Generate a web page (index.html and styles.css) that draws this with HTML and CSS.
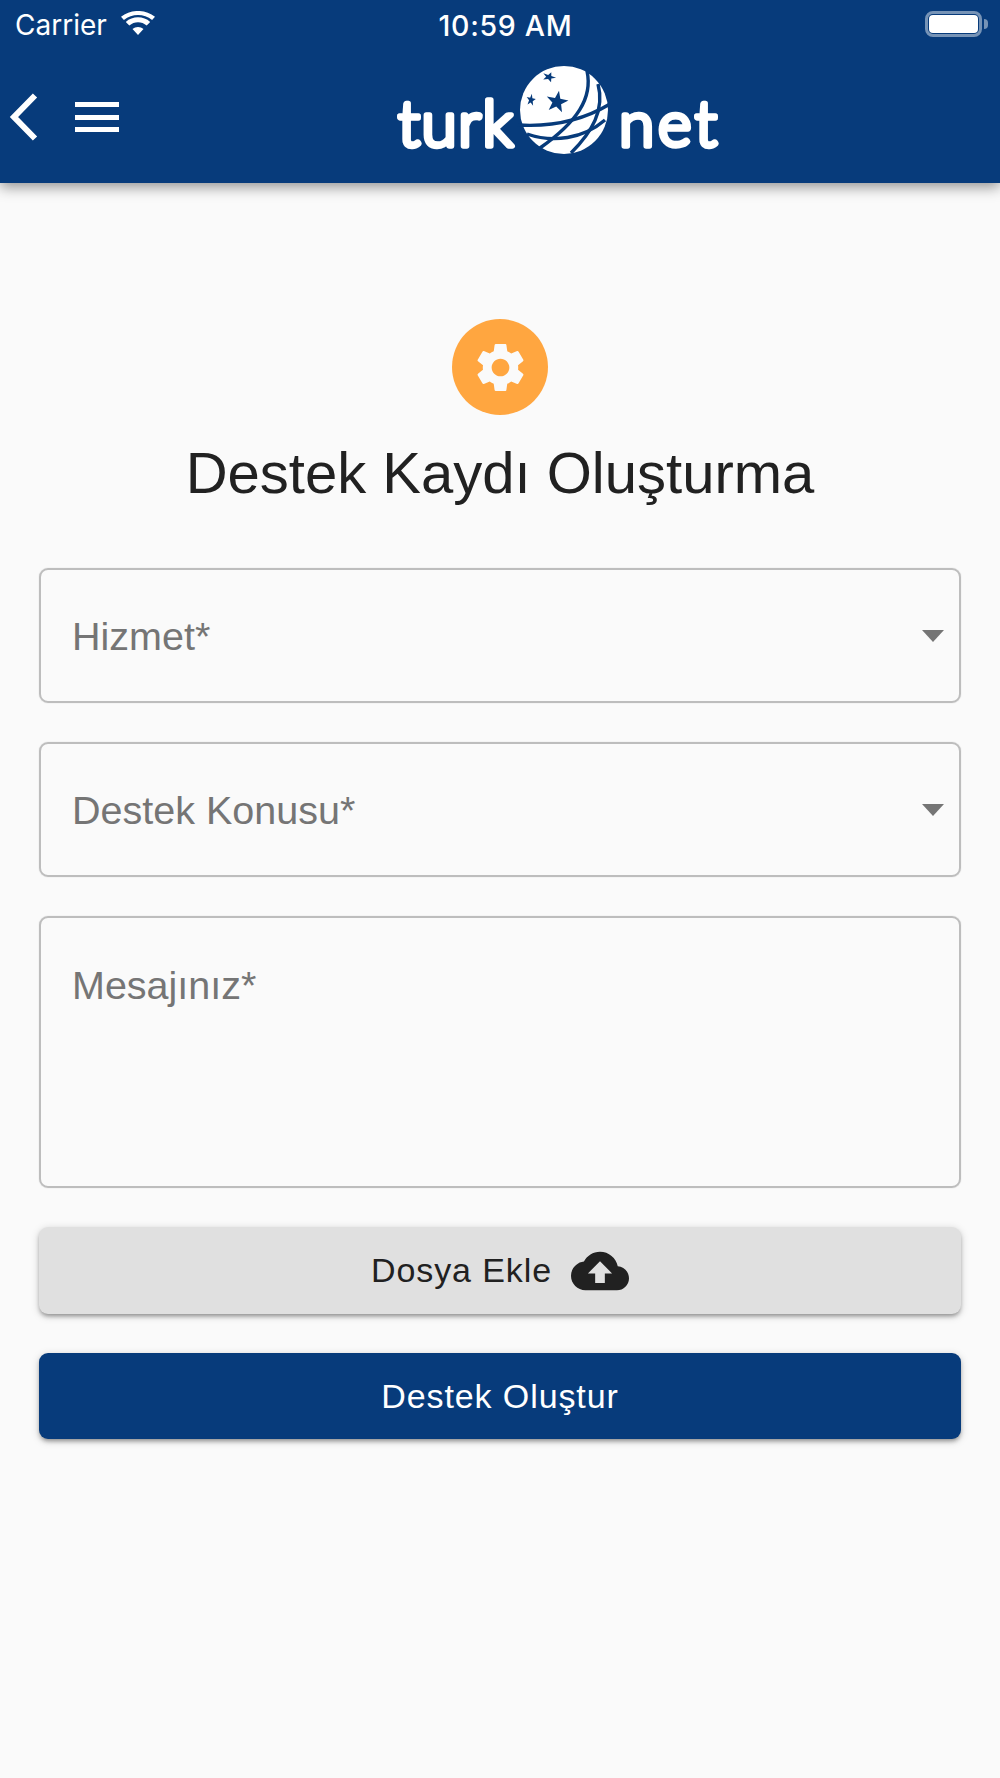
FILE: index.html
```html
<!DOCTYPE html>
<html lang="tr">
<head>
<meta charset="utf-8">
<title>Destek Kaydı Oluşturma</title>
<link rel="stylesheet" href="styles.css">
</head>
<body>
<header class="appbar">
  <div class="status">
    <div class="status-left">
      <span class="carrier">Carrier</span>
      <svg class="wifi" viewBox="0 0 34 24" aria-hidden="true"><path d="M17 24 L11.5 18 C14.5 15.2 19.5 15.2 22.5 18 Z M8.3 14.6 L4.8 10.9 C11.5 4.8 22.5 4.8 29.2 10.9 L25.7 14.6 C20.8 10 13.2 10 8.3 14.6 Z M2.9 8.9 L0 5.8 C9.6 -2 24.4 -2 34 5.8 L31.1 8.9 C22.9 2.4 11.1 2.4 2.9 8.9 Z"/></svg>
    </div>
    <span class="clock">10:59 AM</span>
    <div class="battery"><span class="battery-body"><span class="battery-fill"></span></span><span class="battery-tip"></span></div>
  </div>
  <div class="nav">
    <div class="nav-left">
      <svg class="back" viewBox="0 0 30 48" aria-hidden="true"><path d="M26 2.5 L5 24 L26 45.500" fill="none" stroke="#fff" stroke-width="6"/></svg>
      <span class="menu"><i></i><i></i><i></i></span>
    </div>
    <svg class="logo" viewBox="390 60 340 100" role="img" aria-label="turk net">
      <text class="logo-text" x="398" y="146" textLength="115" lengthAdjust="spacing">turk</text>
      <text class="logo-text" x="619" y="146" textLength="98" lengthAdjust="spacing">net</text>
      <circle cx="564" cy="110" r="44" fill="#fff"/>
      <g fill="none" stroke="#073b7b" stroke-width="3.4">
        <path d="M587 71 C593 98 577 122 540 148"/>
        <path d="M598 84 C605 110 592 132 571 153"/>
        <path d="M518 125 C550 127 580 122 610 104"/>
        <path d="M527 134 C553 143 583 139 605 120"/>
      </g>
      <path class="star" d="M559 90.7 L560.3 98.8 L568.4 100.4 L561.1 104.2 L562 112.3 L556.2 106.5 L548.7 110 L552.4 102.6 L546.8 96.6 L555 97.9 Z"/>
      <path class="star" transform="translate(549 77) rotate(12) scale(.62 .46) translate(-557 -102)" d="M559 90.7 L560.3 98.8 L568.4 100.4 L561.1 104.2 L562 112.3 L556.2 106.5 L548.7 110 L552.4 102.6 L546.8 96.6 L555 97.9 Z"/>
      <path class="star" transform="translate(531 100) scale(.42 .56) translate(-557 -102)" d="M559 90.7 L560.3 98.8 L568.4 100.4 L561.1 104.2 L562 112.3 L556.2 106.5 L548.7 110 L552.4 102.6 L546.8 96.6 L555 97.9 Z"/>
    </svg>
  </div>
</header>
<main class="content">
  <div class="badge">
    <svg viewBox="0 0 24 24" aria-hidden="true"><path d="M19.14,12.94c0.04-0.3,0.06-0.61,0.06-0.94c0-0.32-0.02-0.64-0.07-0.94l2.03-1.58c0.18-0.14,0.23-0.41,0.12-0.61 l-1.92-3.32c-0.12-0.22-0.37-0.29-0.59-0.22l-2.39,0.96c-0.5-0.38-1.03-0.7-1.62-0.94L14.4,2.81c-0.04-0.24-0.24-0.41-0.48-0.41 h-3.84c-0.24,0-0.43,0.17-0.47,0.41L9.25,5.35C8.66,5.59,8.12,5.92,7.63,6.29L5.24,5.33c-0.22-0.08-0.47,0-0.59,0.22L2.74,8.87 C2.62,9.08,2.66,9.34,2.86,9.48l2.03,1.58C4.84,11.36,4.8,11.69,4.8,12s0.02,0.64,0.07,0.94l-2.03,1.58 c-0.18,0.14-0.23,0.41-0.12,0.61l1.92,3.32c0.12,0.22,0.37,0.29,0.59,0.22l2.39-0.96c0.5,0.38,1.03,0.7,1.62,0.94l0.36,2.54 c0.05,0.24,0.24,0.41,0.48,0.41h3.84c0.24,0,0.44-0.17,0.47-0.41l0.36-2.54c0.59-0.24,1.13-0.56,1.62-0.94l2.39,0.96 c0.22,0.08,0.47,0,0.59-0.22l1.92-3.32c0.12-0.22,0.07-0.47-0.12-0.61L19.14,12.94z M12,15.6c-1.98,0-3.6-1.62-3.6-3.6 s1.62-3.6,3.6-3.6s3.6,1.62,3.6,3.6S13.98,15.6,12,15.6z"/></svg>
  </div>
  <h1 class="title">Destek Kaydı Oluşturma</h1>
  <form class="form">
    <div class="field field-select"><span class="label">Hizmet*</span><span class="caret"></span></div>
    <div class="field field-select"><span class="label">Destek Konusu*</span><span class="caret"></span></div>
    <div class="field field-area"><span class="label">Mesajınız*</span></div>
    <button class="btn btn-file" type="button">Dosya Ekle
      <svg class="cloud" viewBox="0 0 24 24" aria-hidden="true"><path d="M19.35 10.04C18.67 6.59 15.64 4 12 4 9.11 4 6.6 5.64 5.35 8.04 2.34 8.36 0 10.91 0 14c0 3.31 2.69 6 6 6h13c2.76 0 5-2.24 5-5 0-2.64-2.05-4.78-4.65-4.96zM14 13v4h-4v-4H7l5-5 5 5h-3z"/></svg>
    </button>
    <button class="btn btn-primary" type="button">Destek Oluştur</button>
  </form>
</main>
</body>
</html>
```
FILE: styles.css
```css
* { box-sizing: border-box; }
html, body { margin: 0; height: 100%; }
body { background: #fafafa; font-family: "Liberation Sans", Arial, sans-serif; color: #212121; min-height: 1778px; }
.appbar { background: #073b7b; height: 183px; box-shadow: 0 4px 13px rgba(0,0,0,.42); color: #fff; }
.status { height: 50px; display: grid; grid-template-columns: 1fr auto 1fr; align-items: center; padding: 0 12px 0 15px; }
.status-left { display: flex; align-items: center; gap: 14px; }
.carrier { font: 400 28px Inter, sans-serif; }
.wifi { width: 34px; height: 24px; fill: #fff; margin-top: -4px; }
.clock { font: 500 28.5px Inter, sans-serif; letter-spacing: .7px; margin-left: 8px; }
.battery { justify-self: end; display: flex; align-items: center; gap: 2px; margin-top: -2px; }
.battery-body { width: 57px; height: 26px; border: 3px solid rgba(255,255,255,.45); border-radius: 8px; padding: 1px; display: block; }
.battery-fill { display: block; height: 100%; background: #fff; border-radius: 4px; }
.battery-tip { width: 4px; height: 10px; background: rgba(255,255,255,.45); border-radius: 0 4px 4px 0; }
.nav { height: 133px; position: relative; display: flex; align-items: flex-start; padding: 43px 0 0 9px; }
.nav-left { display: flex; align-items: center; gap: 36px; }
.back { width: 30px; height: 48px; display: block; }
.menu { display: flex; flex-direction: column; gap: 7.5px; width: 44px; }
.menu i { display: block; height: 5px; background: #fff; }
.logo { position: absolute; left: 390px; top: 10px; width: 340px; height: 100px; }
.logo-text { font: 300 64px Lato, sans-serif; fill: #fff; stroke: #fff; stroke-width: 5.5; stroke-linejoin: round; stroke-linecap: round; }
.star { fill: #073b7b; }
.content { padding: 136px 39px 0; display: flex; flex-direction: column; align-items: center; }
.badge { width: 96px; height: 96px; border-radius: 50%; background: #ffa640; display: flex; align-items: center; justify-content: center; }
.badge svg { width: 59px; height: 59px; fill: #fafafa; }
.title { margin: 23px 0 0; font-size: 58px; line-height: 70px; font-weight: 400; color: #212121; white-space: nowrap; }
.form { width: 100%; display: flex; flex-direction: column; gap: 39px; margin-top: 60px; }
.field { border: 2px solid #bdbdbd; border-radius: 9px; padding: 0 31px; display: flex; position: relative; box-shadow: 0 0 1px rgba(189,189,189,.9); }
.field-select { height: 135px; align-items: center; padding-top: 1px; }
.field-area { height: 272px; align-items: flex-start; padding-top: 45px; }
.label { font-size: 39.5px; line-height: 44px; color: #757575; }
.caret { position: absolute; right: 15px; top: 60px; border-style: solid; border-width: 12px 11.5px 0; border-color: #757575 transparent transparent; }
.btn { height: 87px; border: 0; border-radius: 9px; font: 400 34px "Liberation Sans", Arial, sans-serif; letter-spacing: .9px; display: flex; align-items: center; justify-content: center; box-shadow: 0 3px 4px -1px rgba(0,0,0,.34), 0 2px 8px rgba(0,0,0,.18); }
.btn-file { background: #e0e0e0; color: #212121; gap: 19px; }
.cloud { width: 58px; height: 58px; fill: #212121; }
.btn-primary { background: #073b7b; color: #fff; height: 86px; }
```
